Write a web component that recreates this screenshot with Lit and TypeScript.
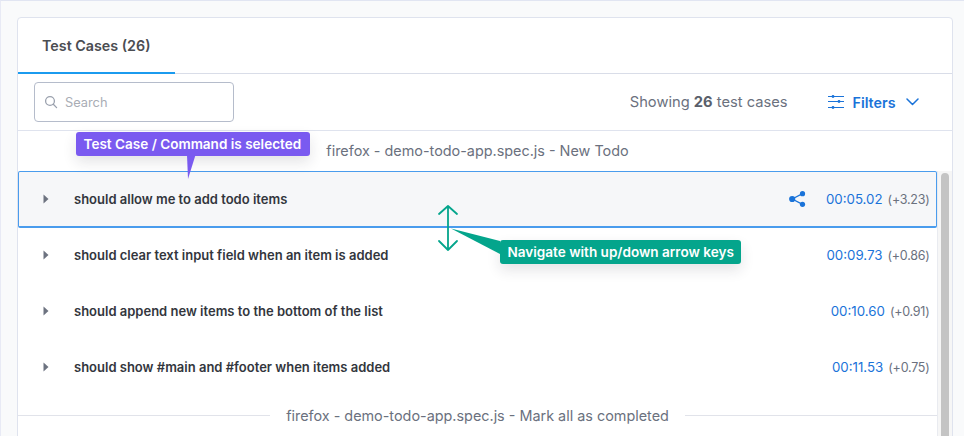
import { LitElement, html, css } from "lit";
import { customElement } from "lit/decorators.js";

const rows = [
  { name: "should allow me to add todo items", time: "00:05.02", delta: "(+3.23)", selected: true },
  { name: "should clear text input field when an item is added", time: "00:09.73", delta: "(+0.86)" },
  { name: "should append new items to the bottom of the list", time: "00:10.60", delta: "(+0.91)" },
  { name: "should show #main and #footer when items added", time: "00:11.53", delta: "(+0.75)" },
];

@customElement("app-root")
export class AppRoot extends LitElement {
  static styles = css`
    :host {
      display: block;
      width: 964px;
      height: 436px;
      overflow: hidden;
      position: relative;
      box-sizing: border-box;
      background: #f9fafb;
      border-top: 1px solid #e1e5f2;
      border-left: 1px solid #e8eaf5;
      padding: 16px 11px 0 16px;
      font-family: Inter, "Liberation Sans", sans-serif;
      color: #3a3f4b;
    }
    * { box-sizing: border-box; }
    .card {
      height: 440px;
      background: #fff;
      border: 1px solid #dfe3ee;
      border-radius: 4px 4px 0 0;
      display: flex;
      flex-direction: column;
    }
    .tabs { height: 56px; flex: none; border-bottom: 1px solid #d9dde8; display: flex; }
    .tab {
      width: 157px; height: 56px; border-bottom: 2px solid #1b9bef;
      padding-left: 24px; font-weight: 600; font-size: 14.3px; line-height: 55px; color: #4b4d52;
    }
    .toolbar {
      height: 57px; flex: none; border-bottom: 1px solid #dfe3ee;
      display: flex; align-items: center; padding: 0 33.5px 0 16px;
    }
    .search {
      width: 200px; height: 40px; border: 1px solid #b5bccb; border-radius: 4px;
      display: flex; align-items: center; gap: 7px; padding-left: 9px;
      font-size: 12.8px; color: #a9adb5;
    }
    .showing { margin-left: auto; font-size: 14.7px; color: #6b717e; }
    .showing b { font-weight: 700; color: #5a5f6b; }
    .filters {
      margin-left: 40px; display: flex; align-items: center; gap: 9px;
      color: #1a73d9; font-size: 14.3px; font-weight: 600;
    }
    .filter-icon { display: block; }
    .chevron { display: block; margin-left: 1px; }
    .group {
      height: 40px; flex: none; display: flex; align-items: center; justify-content: center;
      gap: 16px; font-size: 14.4px; color: #6b717e;
    }
    .group.first { padding: 0 15px 1px 0; }
    .body { flex: 1; display: flex; min-height: 0; }
    .list { flex: 1; min-width: 0; }
    .scroll {
      width: 15px; flex: none; background: #f6f6f6; border-left: 1px solid #e9ebf0;
      padding: 2px 3px 0 3px;
    }
    .thumb { width: 8px; height: 400px; background: #c4c4c4; border-radius: 4px 4px 0 0; }
    .rule { flex: 1; height: 1px; background: #e1e3ea; }
    .row {
      height: 56px; display: flex; align-items: center; padding: 0 7.5px 0 25px;
      font-size: 13px; font-weight: 600; color: #33363d;
    }
    .row.selected {
      height: 57px; margin-bottom: -1px;
      background: #f6f7f9; border: 1px solid #4a9ced; border-bottom-width: 2px;
      border-radius: 2px; padding-left: 24px; padding-right: 6.5px;
    }
    .caret { width: 6px; height: 10px; flex: none; margin-right: 25px; }
    .name { flex: 1; }
    .share { margin-right: 20px; display: block; }
    .time { font-size: 13.3px; font-weight: 400; color: #1a73d9; }
    .delta { font-size: 12.5px; letter-spacing: -0.25px; font-weight: 400; color: #6b717e; margin-left: 5px; }

    .tip {
      position: absolute; height: 24px; border-radius: 3px; color: #fff;
      font-weight: 600; font-size: 13.55px; line-height: 24px; padding: 0 7.5px; white-space: nowrap;
      box-shadow: 0 6px 14px rgba(30, 30, 50, 0.12);
    }
    .tip.purple { left: 75px; top: 131px; width: 234px; background: #7a5af0; }
    .tip.green { left: 499px; top: 239px; width: 241px; background: #04a58c; }
    .overlay { position: absolute; left: -1px; top: -1px; pointer-events: none; }
  `;

  private caret() {
    return html`<svg class="caret" viewBox="0 0 6 10"><path d="M0.5 0.5 L5.5 5 L0.5 9.5 Z" fill="#6d7380"/></svg>`;
  }

  render() {
    return html`
      <div class="card">
        <div class="tabs"><div class="tab">Test Cases (26)</div></div>
        <div class="toolbar">
          <div class="search">
            <svg width="14" height="14" viewBox="0 0 14 14" fill="none" stroke="#9aa0ad" stroke-width="1.3">
              <circle cx="6" cy="6" r="4.4"/><path d="M9.3 9.3 L12.6 12.6" stroke-linecap="round"/>
            </svg>
            <span>Search</span>
          </div>
          <div class="showing">Showing <b>26</b> test cases</div>
          <div class="filters">
            <svg class="filter-icon" width="16" height="14" viewBox="0 0 16 14" fill="none" stroke="#1a73d9" stroke-width="1">
              <path d="M0 1.5 H16 M0 6.5 H16 M0 12.5 H16"/>
              <circle cx="5" cy="1.5" r="1.4" fill="#1a73d9" stroke="none"/>
              <circle cx="11" cy="6.5" r="1.4" fill="#1a73d9" stroke="none"/>
              <circle cx="5" cy="12.5" r="1.4" fill="#1a73d9" stroke="none"/>
            </svg>
            <span>Filters</span>
            <svg class="chevron" width="13" height="8" viewBox="0 0 13 8" fill="none" stroke="#1a73d9" stroke-width="1.5" stroke-linecap="round" stroke-linejoin="round"><path d="M1 1 L6.5 6.5 L12 1"/></svg>
          </div>
        </div>
        <div class="group first"><span>firefox - demo-todo-app.spec.js - New Todo</span></div>
        <div class="body">
          <div class="list">
            ${rows.map(
              (r) => html`<div class="row ${r.selected ? "selected" : ""}">
                ${this.caret()}
                <span class="name">${r.name}</span>
                ${r.selected
                  ? html`<svg class="share" width="17" height="16" viewBox="0 0 17 16" fill="#1a73d9">
                      <circle cx="3.2" cy="8" r="3.1"/><circle cx="13.5" cy="2.7" r="2.6"/><circle cx="13.5" cy="13.3" r="2.6"/>
                      <path d="M3.2 8 L13.5 2.7 M3.2 8 L13.5 13.3" stroke="#1a73d9" stroke-width="1.3"/>
                    </svg>`
                  : ""}
                <span class="time">${r.time}</span><span class="delta">${r.delta}</span>
              </div>`
            )}
            <div class="group">
              <span class="rule"></span>
              <span>firefox - demo-todo-app.spec.js - Mark all as completed</span>
              <span class="rule"></span>
            </div>
          </div>
          <div class="scroll"><div class="thumb"></div></div>
        </div>
      </div>

      <div class="tip purple">Test Case / Command is selected</div>
      <div class="tip green">Navigate with up/down arrow keys</div>
      <svg class="overlay" width="966" height="438" viewBox="0 0 966 438" fill="none">
        <path d="M187 155 H195.5 L188 179 Z" fill="#7a5af0"/>
        <path d="M451 228.5 L500 241 V254 Z" fill="#04a58c"/>
        <path d="M448 206 V250 M439 214 L448 206 L457 214 M439 241 L448 250 L457 241" stroke="#04a58c" stroke-width="1.8" stroke-linecap="round" stroke-linejoin="round"/>
      </svg>
    `;
  }
}
